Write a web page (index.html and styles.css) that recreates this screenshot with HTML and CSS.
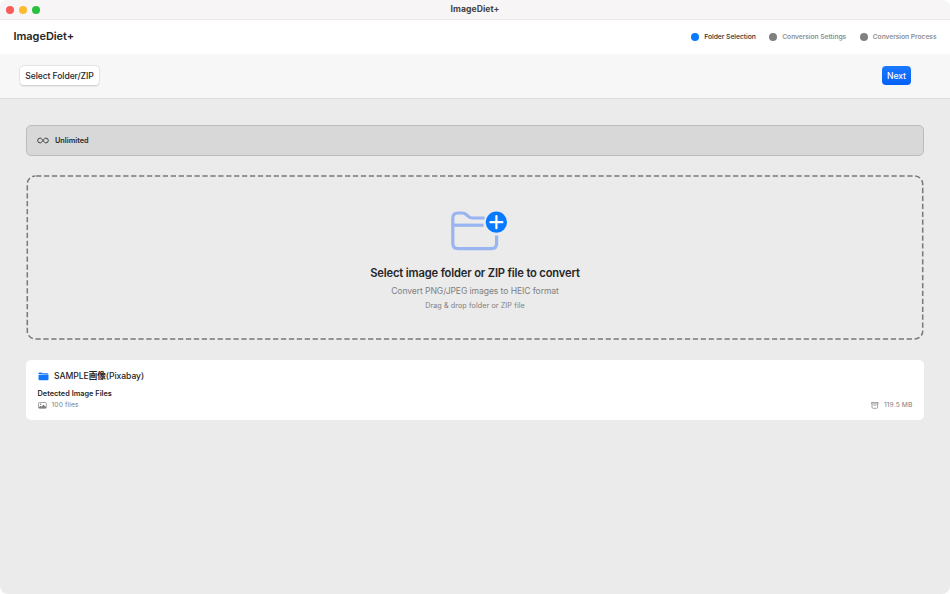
FILE: index.html
```html
<!DOCTYPE html>
<html lang="en">
<head>
<meta charset="utf-8">
<title>ImageDiet+</title>
<link rel="stylesheet" href="styles.css">
</head>
<body>
<div class="window">
  <div class="titlebar">
    <div class="lights"><span class="light red"></span><span class="light yellow"></span><span class="light green"></span></div>
    <span class="window-title">ImageDiet+</span>
  </div>
  <header class="header">
    <h1 class="brand">ImageDiet+</h1>
    <ol class="steps">
      <li class="step active"><i class="dot"></i><span>Folder Selection</span></li>
      <li class="step"><i class="dot"></i><span>Conversion Settings</span></li>
      <li class="step"><i class="dot"></i><span>Conversion Process</span></li>
    </ol>
  </header>
  <div class="toolbar">
    <button class="btn select">Select Folder/ZIP</button>
    <button class="btn next">Next</button>
  </div>
  <main class="content">
    <div class="plan">
      <svg class="infinity" viewBox="0 0 12 7"><path d="M6 3.500C4.900 2 4.200 1.100 3.100 1.100a2.400 2.400 0 0 0 0 4.800C4.200 5.900 4.900 5 6 3.500S7.800 1.100 8.900 1.100a2.400 2.400 0 0 1 0 4.800C7.800 5.900 7.100 5 6 3.500z"/></svg>
      <span>Unlimited</span>
    </div>
    <div class="drop">
      <svg class="outline"><rect x="1.300" y="1" width="895.400" height="163" rx="8"/></svg>
      <svg class="folder-add" viewBox="0 0 57 42">
        <g class="folder-lines"><path d="M34.500 8H22.500c-2 0-3-.6-4.500-1.900l-1.500-1.300C15.200 3.500 14 3 12 3H8C4.500 3 2.800 4.700 2.800 8v25.500c0 3.400 1.700 5.100 5.200 5.100h33.500c3.400 0 5.100-1.700 5.100-5.100V25.500"/><path d="M3 15.200H33.500"/></g>
        <circle class="badge" cx="46.400" cy="12.200" r="10.600"/>
        <path class="plus" d="M46.400 6.200v12M40.400 12.200h12"/>
      </svg>
      <h2 class="drop-title">Select image folder or ZIP file to convert</h2>
      <p class="drop-sub">Convert PNG/JPEG images to HEIC format</p>
      <p class="drop-hint">Drag &amp; drop folder or ZIP file</p>
    </div>
    <section class="card">
      <div class="folder-row">
        <svg class="folder" viewBox="0 0 11 9"><path d="M.5 2V1.500Q.5.5 1.500.5h1.700q.6 0 1 .4l.3.200q.3.200.8.200h4q1 0 1 .9v.2zM.5 2.700h10v4.500q0 1.100-1.100 1.100H1.600Q.5 8.300.5 7.200z"/></svg>
        <span class="folder-name">SAMPLE<b>画像</b>(Pixabay)</span>
      </div>
      <div class="detected">Detected Image Files</div>
      <div class="meta">
        <span class="meta-item"><svg class="photo" viewBox="0 0 9 7"><rect x=".5" y=".5" width="7.800" height="5.900" rx=".9"/><path class="fill" d="M.8 5.300l1.700-1.500 1 .8 2-1.900 2.600 2.400v1H.8z"/><circle class="fill" cx="2.600" cy="2.300" r=".7"/></svg><span>100 files</span></span>
        <span class="meta-item"><svg class="archive" viewBox="0 0 8 7"><path d="M.5.500h6.600v1.400H.5zM1 1.900v3.400q0 1 1 1h3.600q1 0 1-1V1.900M2.700 3.300h2.200"/></svg><span>119.5 MB</span></span>
      </div>
    </section>
  </main>
</div>
</body>
</html>
```

FILE: styles.css
```css
* { box-sizing: border-box; margin: 0; padding: 0; }
body { background: #fff; font-family: Inter, "Noto Sans CJK JP", sans-serif; color: #262626; }
.window { width: 950px; height: 594px; border-radius: 8px; overflow: hidden; background: #ebebeb; }
svg { display: block; flex: none; fill: none; }
.titlebar { display: grid; grid-template-columns: 1fr auto 1fr; align-items: center; height: 20px; padding: 0 5.500px; background: #f7f5f6; border-bottom: 1px solid #ebe9ea; }
.lights { display: flex; gap: 5.200px; }
.light { width: 8px; height: 8px; border-radius: 50%; }
.red { background: #f95c57; }
.yellow { background: #fbbb2e; }
.green { background: #28c03f; }
.window-title { margin-bottom: 2px; font-size: 8.600px; line-height: 12px; letter-spacing: .05px; font-weight: 700; color: #444; }
.header { display: flex; align-items: center; justify-content: space-between; height: 34px; padding: 0 13.500px 1px; background: #fff; }
.brand { margin-bottom: 2px; font-size: 11px; line-height: 16px; letter-spacing: -.05px; font-weight: 600; }
.steps { display: flex; gap: 13.500px; list-style: none; }
.step { display: flex; align-items: center; gap: 5px; font-size: 6.800px; line-height: 10px; letter-spacing: -.07px; font-weight: 500; color: #858585; }
.step.active { color: #303030; }
.dot { width: 8px; height: 8px; border-radius: 50%; background: #808080; }
.active .dot { background: #087aff; }
.toolbar { display: flex; align-items: center; justify-content: space-between; height: 45px; padding: 0 39px 1px 20px; background: #f7f7f7; border-bottom: 1px solid #dedede; }
.btn { height: 19px; border: 0; border-radius: 4px; font: 500 8.600px/18px Inter, sans-serif; letter-spacing: -.1px; text-align: center; white-space: nowrap; }
.select { width: 79px; background: #fff; color: #262626; box-shadow: 0 0 0 .5px #dedede, 0 .5px 1.500px #bbb; }
.next { width: 29px; background: linear-gradient(#1b78ff, #0561f5); color: #fff; }
.content { padding: 26px 26px 0; }
.plan { display: flex; align-items: center; gap: 6px; height: 31px; padding: 0 10px; border: 1px solid #bcbcbc; border-radius: 5px; background: #d8d8d8; font-size: 7.300px; font-weight: 600; }
.infinity { width: 12px; height: 7px; stroke: #303030; stroke-width: .9; }
.drop { position: relative; display: flex; flex-direction: column; align-items: center; height: 165px; margin-top: 19px; padding-top: 35px; }
.outline { position: absolute; inset: 0; width: 898px; height: 165px; }
.outline rect { stroke: #787878; stroke-width: 1.500; stroke-dasharray: 5.280 2.640; stroke-dashoffset: -.8; }
.folder-add { width: 57px; height: 42px; margin-left: 6px; }
.folder-lines { stroke: #98b5f2; stroke-width: 3.200; }
.badge { fill: #087aff; }
.plus { stroke: #fff; stroke-width: 2.200; stroke-linecap: round; }
.drop-title { margin-top: 13px; font-size: 11.200px; line-height: 16px; letter-spacing: -.165px; font-weight: 600; }
.drop-sub { margin-top: 4px; font-size: 8.600px; line-height: 12px; letter-spacing: -.09px; color: #808080; }
.drop-hint { margin-top: 4px; font-size: 7.200px; line-height: 10px; letter-spacing: .09px; color: #808080; }
.card { height: 60px; margin-top: 20px; padding: 10px 11.500px; border-radius: 5px; background: #fff; }
.folder-row { display: flex; align-items: center; gap: 5.500px; height: 13px; }
.folder { width: 11px; height: 9px; fill: #1478ff; }
.folder-name { font-size: 8.600px; line-height: 13px; letter-spacing: -.05px; font-weight: 500; white-space: nowrap; }
.detected { margin-top: 6px; font-size: 7.300px; line-height: 10px; letter-spacing: .03px; font-weight: 600; }
.meta { display: flex; justify-content: space-between; margin-top: 1px; font-size: 6.700px; line-height: 11px; letter-spacing: .12px; color: #808080; }
.meta-item { display: flex; align-items: center; gap: 5px; }
.photo, .archive { stroke: #808080; stroke-width: .7; }
.photo { width: 9px; height: 7px; }
.archive { width: 8px; height: 7px; }
.fill { fill: #808080; stroke: none; }
```
